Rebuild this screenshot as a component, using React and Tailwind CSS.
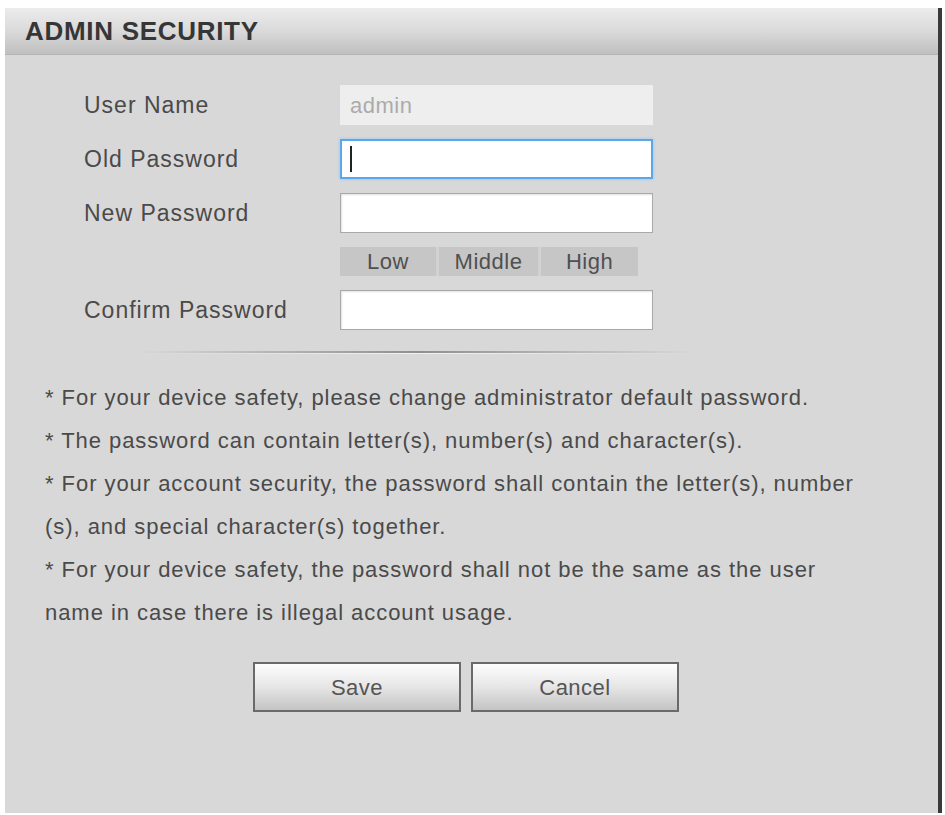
import React from 'react';

const font = { fontFamily: '"Liberation Sans", Arial, sans-serif' };

function Field({ label, children }) {
    return (
        <div className="flex items-center h-[40px]">
            <div className="w-[335px] pl-[79px] text-[23px] tracking-[1px] text-[#4a4a4a] whitespace-nowrap">{label}</div>
            {children}
        </div>
    );
}

function TextBox({ focused }) {
    return (
        <div
            className={
                'w-[313px] h-[40px] bg-white flex items-center ' +
                (focused
                    ? 'border-2 border-[#5aa8ea] shadow-[0_0_3px_#8fc4f0]'
                    : 'border border-[#a9a9a9] shadow-[inset_1px_1px_2px_rgba(0,0,0,0.12)]')
            }
        >
            {focused && <div className="ml-[8px] w-[2px] h-[26px] bg-[#222]" />}
        </div>
    );
}

export default function App() {
    const notes = [
        '* For your device safety, please change administrator default password.',
        '* The password can contain letter(s), number(s) and character(s).',
        '* For your account security, the password shall contain the letter(s), number',
        '(s), and special character(s) together.',
        '* For your device safety, the password shall not be the same as the user',
        'name in case there is illegal account usage.',
    ];

    return (
        <div className="w-[945px] h-[815px] bg-white pt-[8px] pl-[5px]" style={font}>
            <div className="w-[937px] h-[805px] bg-[#d8d8d8] border-r-[4px] border-[#3a3a3a] flex flex-col">
                <div className="h-[47px] flex items-center pl-[20px] bg-gradient-to-b from-[#ececec] via-[#dadada] to-[#bfbfbf] border-b border-[#b5b5b5]">
                    <span className="text-[26px] font-bold tracking-[0.7px] text-[#363636]">ADMIN SECURITY</span>
                </div>

                <div className="flex flex-col pt-[30px] gap-[14px]">
                    <Field label="User Name">
                        <div className="w-[313px] h-[40px] bg-[#eeeeee] flex items-center pl-[10px] text-[22px] tracking-[0.5px] text-[#ababab]">
                            admin
                        </div>
                    </Field>
                    <Field label="Old Password">
                        <TextBox focused />
                    </Field>
                    <Field label="New Password">
                        <TextBox />
                    </Field>
                    <div className="flex h-[29px]">
                        <div className="w-[335px]" />
                        <div className="w-[298px] flex gap-[3px] bg-[#d2d2d2]">
                            <div className="w-[96px] bg-[#c6c6c6] flex items-center justify-center text-[22px] tracking-[0.5px] text-[#505050]">Low</div>
                            <div className="w-[99px] bg-[#c6c6c6] flex items-center justify-center text-[22px] tracking-[0.5px] text-[#505050]">Middle</div>
                            <div className="flex-1 bg-[#c6c6c6] flex items-center justify-center text-[22px] tracking-[0.5px] text-[#505050]">High</div>
                        </div>
                    </div>
                    <Field label="Confirm Password">
                        <TextBox />
                    </Field>
                </div>

                <div className="mt-[21px] ml-[135px] w-[555px]">
                    <div className="h-[2px] bg-gradient-to-r from-transparent via-[#8f8f8f] to-transparent" />
                    <div className="h-[1px] bg-gradient-to-r from-transparent via-[#f2f2f2] to-transparent" />
                </div>

                <div className="mt-[22px] pl-[40px] flex flex-col">
                    {notes.map((n, i) => (
                        <div key={i} className="h-[43px] leading-[43px] text-[22px] tracking-[0.95px] text-[#4a4a4a] whitespace-nowrap">
                            {n}
                        </div>
                    ))}
                </div>

                <div className="mt-[28px] flex gap-[10px] pl-[248px]">
                    {['Save', 'Cancel'].map((b) => (
                        <button
                            key={b}
                            className="w-[208px] h-[50px] border-2 border-[#6a6a6a] bg-gradient-to-b from-[#fdfdfd] via-[#e6e6e6] to-[#c4c4c4] text-[22px] tracking-[0.5px] text-[#555]"
                        >
                            {b}
                        </button>
                    ))}
                </div>
            </div>
        </div>
    );
}
